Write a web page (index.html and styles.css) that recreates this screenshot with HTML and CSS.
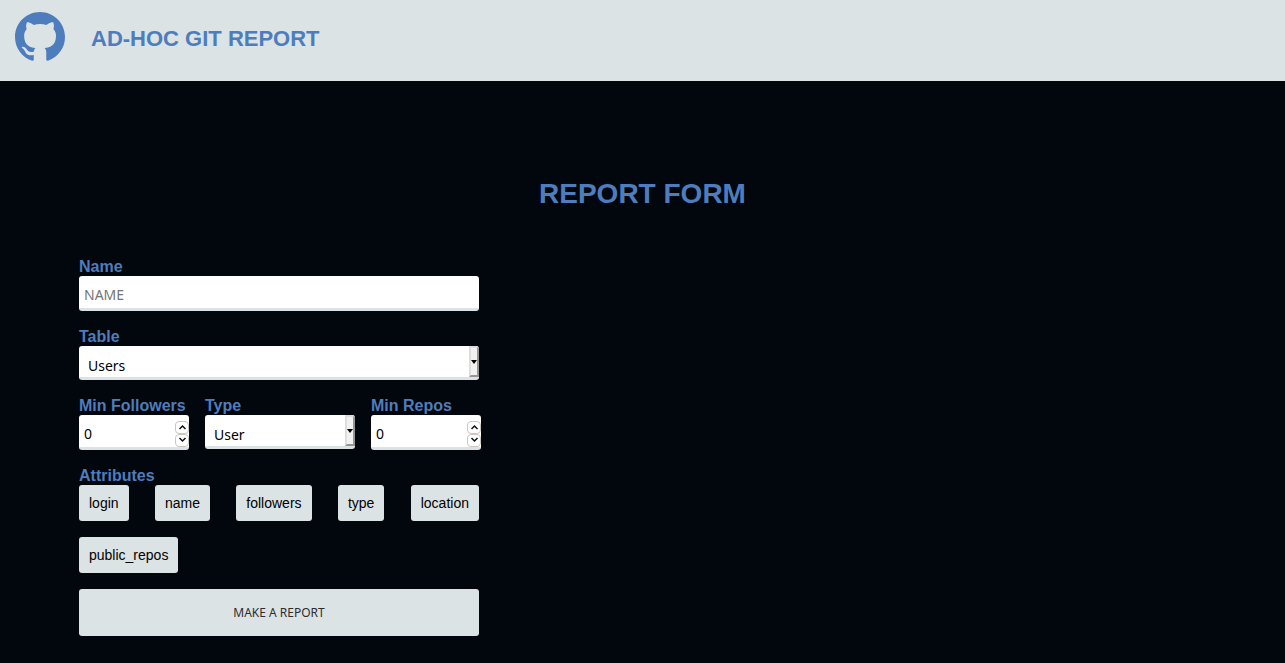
FILE: index.html
```html
<!DOCTYPE html>
<html lang="en">
<head>
<meta charset="utf-8">
<title>Ad-Hoc Git Report</title>
<link rel="stylesheet" href="styles.css">
</head>
<body>
<header class="header">
  <svg class="logo" viewBox="0 0 16 16" aria-hidden="true"><path d="M8 0C3.58 0 0 3.58 0 8c0 3.54 2.29 6.53 5.47 7.59.4.07.55-.17.55-.38 0-.19-.01-.82-.01-1.49-2.01.37-2.53-.49-2.69-.94-.09-.23-.48-.94-.82-1.13-.28-.15-.68-.52-.01-.53.63-.01 1.08.58 1.23.82.72 1.21 1.87.87 2.33.66.07-.52.28-.87.51-1.07-1.78-.2-3.64-.89-3.64-3.95 0-.87.31-1.59.82-2.15-.08-.2-.36-1.02.08-2.12 0 0 .67-.21 2.2.82.64-.18 1.32-.27 2-.27s1.36.09 2 .27c1.53-1.04 2.2-.82 2.2-.82.44 1.1.16 1.92.08 2.12.51.56.82 1.27.82 2.15 0 3.07-1.87 3.75-3.65 3.95.29.25.54.73.54 1.48 0 1.07-.01 1.93-.01 2.2 0 .21.15.46.55.38A8.01 8.01 0 0 0 16 8c0-4.42-3.58-8-8-8z"/></svg>
  <h1 class="brand">AD-HOC GIT REPORT</h1>
</header>
<main class="main">
  <h2 class="heading">REPORT FORM</h2>
  <form class="form">
    <div class="field">
      <label class="label" for="name">Name</label>
      <input class="control" id="name" type="text" placeholder="NAME">
    </div>
    <div class="field">
      <label class="label" for="table">Table</label>
      <div class="select-box">
        <select class="control select" id="table"><option>Users</option></select>
        <span class="drop"></span>
      </div>
    </div>
    <div class="filters">
      <div class="field small">
        <label class="label" for="followers">Min Followers</label>
        <div class="number-box">
          <input class="control number" id="followers" type="number" value="0">
          <div class="spinner">
            <button class="step" type="button" aria-label="More followers"><svg viewBox="0 0 9 9"><path d="M1.5 6 4.5 3l3 3"/></svg></button>
            <button class="step" type="button" aria-label="Fewer followers"><svg viewBox="0 0 9 9"><path d="M1.5 2 4.5 5l3-3"/></svg></button>
          </div>
        </div>
      </div>
      <div class="field medium">
        <label class="label" for="type">Type</label>
        <div class="select-box">
          <select class="control select" id="type"><option>User</option></select>
          <span class="drop"></span>
        </div>
      </div>
      <div class="field small">
        <label class="label" for="repos">Min Repos</label>
        <div class="number-box">
          <input class="control number" id="repos" type="number" value="0">
          <div class="spinner">
            <button class="step" type="button" aria-label="More repos"><svg viewBox="0 0 9 9"><path d="M1.5 6 4.5 3l3 3"/></svg></button>
            <button class="step" type="button" aria-label="Fewer repos"><svg viewBox="0 0 9 9"><path d="M1.5 2 4.5 5l3-3"/></svg></button>
          </div>
        </div>
      </div>
    </div>
    <div class="field" role="group" aria-labelledby="attributes">
      <span class="label" id="attributes">Attributes</span>
      <div class="chips">
        <button class="chip" type="button">login</button>
        <button class="chip" type="button">name</button>
        <button class="chip" type="button">followers</button>
        <button class="chip" type="button">type</button>
        <button class="chip" type="button">location</button>
        <button class="chip" type="button">public_repos</button>
      </div>
    </div>
    <button class="submit" type="submit">MAKE A REPORT</button>
  </form>
</main>
</body>
</html>
```
FILE: styles.css
```css
* { box-sizing: border-box; }
body {
  margin: 0;
  background: #02070d;
  color: #4e7dbd;
  font-family: "Liberation Sans", Arial, sans-serif;
}
.header {
  display: flex;
  align-items: center;
  gap: 26px;
  padding: 12px 15px 19px;
  background: #dbe3e5;
}
.logo { width: 50px; height: 50px; fill: #4e7dbd; }
.brand { margin: 0; padding-top: 3px; font-size: 22px; line-height: 26px; }
.main { padding: 97px 79px 24px; }
.heading { margin: 0 0 47px; font-size: 28px; line-height: 32px; text-align: center; }
.form {
  display: flex;
  flex-direction: column;
  gap: 16px;
  max-width: 400px;
}
.field { display: flex; flex-direction: column; }
.label { font-size: 16px; font-weight: bold; line-height: 19px; }
.control {
  width: 100%;
  height: 35px;
  margin: 0;
  padding: 5px 5px 0;
  border: 0;
  border-bottom: 3px solid #dbe3e5;
  border-radius: 3px;
  background: #fff;
  color: #000;
  font-family: "Noto Sans", sans-serif;
  font-size: 14px;
}
.control::placeholder { color: #757575; opacity: 1; }
.select-box, .number-box { position: relative; display: flex; }
.select { height: 34px; padding: 7px 14px 0 9px; appearance: none; }
.drop {
  position: absolute;
  top: 0;
  right: 0;
  bottom: 3px;
  display: flex;
  align-items: center;
  justify-content: center;
  width: 10px;
  border: 2px solid;
  border-color: #dedede #969696 #969696 #dedede;
  border-radius: 0 3px 0 0;
  background: #f2f2f0;
  pointer-events: none;
}
.drop::after {
  flex: none;
  content: "";
  border: 3px solid transparent;
  border-top: 4px solid #000;
  border-bottom: 0;
}
.number { appearance: textfield; }
.number::-webkit-inner-spin-button { display: none; }
.spinner {
  position: absolute;
  top: 6px;
  right: 0;
  display: flex;
  flex-direction: column;
}
.step {
  display: flex;
  align-items: center;
  justify-content: center;
  width: 14px;
  height: 13px;
  padding: 0;
  border: 1px solid #cbc6c0;
  border-radius: 4px;
  background: #fff;
}
.step svg { flex: none; width: 9px; height: 9px; fill: none; stroke: #111; stroke-width: 1.5; }
.filters { display: flex; gap: 16px; }
.small { flex: 0 0 110px; }
.medium { flex: 0 0 150px; }
.chips {
  display: flex;
  flex-wrap: wrap;
  justify-content: space-between;
  gap: 16px;
}
.chip {
  padding: 10px;
  border: 0;
  border-radius: 3px;
  background: #dbe3e5;
  color: #000;
  font: 14px/16px "Liberation Sans", Arial, sans-serif;
}
.submit {
  padding: 15px;
  border: 0;
  border-radius: 3px;
  background: #dbe3e5;
  color: #2d2d2d;
  font: 12px/17px "Noto Sans", sans-serif;
}
```
